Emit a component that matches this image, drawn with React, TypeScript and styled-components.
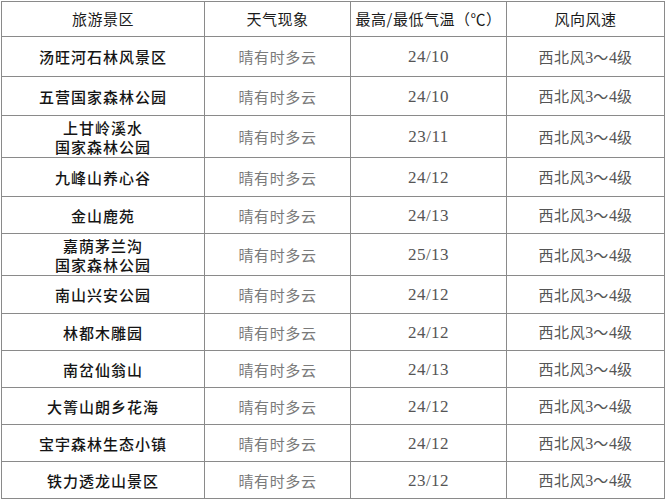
import React from "react";
import styled, { createGlobalStyle } from "styled-components";

const Global = createGlobalStyle`
  html, body { margin: 0; padding: 0; background: #ffffff; }
  body { font-family: "Noto Sans CJK SC", "Noto Sans", sans-serif; }
`;

const Page = styled.div`
  width: 667px;
  height: 500px;
  padding: 1px 0 0 1px;
  box-sizing: border-box;
  background: #fff;
`;

const Table = styled.table`
  border-collapse: collapse;
  table-layout: fixed;
  width: 663px;
  border: 1px solid #8a8a8a;
`;

const Col = styled.col<{ $w: number }>`
  width: ${(p) => p.$w}px;
`;

const Row = styled.tr<{ $h: number }>`
  height: ${(p) => p.$h}px;
`;

const HeadCell = styled.th`
  border: 1px solid #8a8a8a;
  padding: 0;
  font-family: "Noto Sans CJK SC", sans-serif;
  font-weight: 400;
  font-size: 15px;
  letter-spacing: 0.5px;
  color: #1a1a1a;
  text-align: center;
  vertical-align: middle;
  line-height: 18px;
`;

const Cell = styled.td<{ $kind: "name" | "weather" | "temp" | "wind" }>`
  border: 1px solid #8a8a8a;
  padding: 0;
  text-align: center;
  vertical-align: middle;
  line-height: 19px;
  font-family: ${(p) =>
    p.$kind === "temp"
      ? `"Liberation Serif", "Noto Sans CJK SC", serif`
      : `"Noto Sans CJK SC", sans-serif`};
  font-size: ${(p) => (p.$kind === "temp" ? "17px" : "15px")};
  font-weight: ${(p) => (p.$kind === "name" ? 500 : 400)};
  letter-spacing: ${(p) =>
    p.$kind === "name" ? "1px" : p.$kind === "temp" ? "0.5px" : "0.6px"};
  color: ${(p) =>
    p.$kind === "name" ? "#151515" : p.$kind === "weather" ? "#7a7a7a" : "#555555"};
`;

const WindNum = styled.span`
  font-family: "Liberation Serif", serif;
  font-size: 16px;
  letter-spacing: 0;
`;

type Item = { name: string[]; temp: string; h: number };

const rows: Item[] = [
  { name: ["汤旺河石林风景区"], temp: "24/10", h: 40 },
  { name: ["五营国家森林公园"], temp: "24/10", h: 39 },
  { name: ["上甘岭溪水", "国家森林公园"], temp: "23/11", h: 42 },
  { name: ["九峰山养心谷"], temp: "24/12", h: 39 },
  { name: ["金山鹿苑"], temp: "24/13", h: 37 },
  { name: ["嘉荫茅兰沟", "国家森林公园"], temp: "25/13", h: 42 },
  { name: ["南山兴安公园"], temp: "24/12", h: 38 },
  { name: ["林都木雕园"], temp: "24/12", h: 37 },
  { name: ["南岔仙翁山"], temp: "24/13", h: 37 },
  { name: ["大箐山朗乡花海"], temp: "24/12", h: 37 },
  { name: ["宝宇森林生态小镇"], temp: "24/12", h: 37 },
  { name: ["铁力透龙山景区"], temp: "23/12", h: 37 },
];

export default function App() {
  return (
    <Page>
      <Global />
      <Table>
        <colgroup>
          <Col $w={203} />
          <Col $w={146} />
          <Col $w={156} />
          <Col $w={158} />
        </colgroup>
        <thead>
          <Row $h={35}>
            <HeadCell>旅游景区</HeadCell>
            <HeadCell>天气现象</HeadCell>
            <HeadCell>最高/最低气温（℃）</HeadCell>
            <HeadCell>风向风速</HeadCell>
          </Row>
        </thead>
        <tbody>
          {rows.map((r, i) => (
            <Row key={i} $h={r.h}>
              <Cell $kind="name">
                {r.name.map((n, j) => (
                  <div key={j}>{n}</div>
                ))}
              </Cell>
              <Cell $kind="weather">晴有时多云</Cell>
              <Cell $kind="temp">{r.temp}</Cell>
              <Cell $kind="wind">
                西北风<WindNum>3</WindNum>～<WindNum>4</WindNum>级
              </Cell>
            </Row>
          ))}
        </tbody>
      </Table>
    </Page>
  );
}
